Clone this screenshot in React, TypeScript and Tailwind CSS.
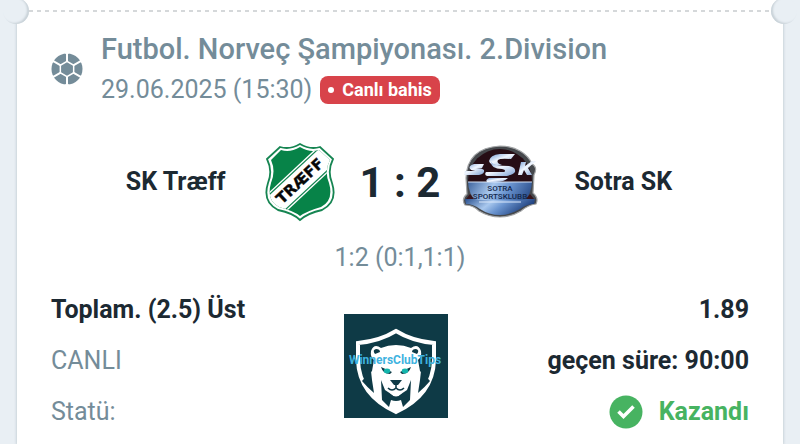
import type { ReactNode } from 'react'

function BallIcon() {
  return (
    <svg viewBox="0 0 32 32" className="size-8 shrink-0" aria-hidden="true">
      <circle cx="16" cy="16" r="15.5" fill="#748c99" />
      <path d="M16 0v32M1 7.300 31 24.700M1 24.700 31 7.300" stroke="#fff" strokeWidth="2" />
      <path d="m16 7.500 7.400 4.300v8.400L16 24.500l-7.400-4.300v-8.400z" fill="#fff" />
      <path d="m16 10 5.200 3v6L16 22l-5.200-3v-6z" fill="#748c99" stroke="#748c99" strokeWidth="1.4" strokeLinejoin="round" />
      <path
        d="m14 0 2 2.500L18 0ZM14 32l2-2.500 2 2.500ZM1 6l2.500 2.800L.5 10ZM31 6l-2.500 2.800 3 1.200ZM1 26l2.500-2.800-3-1.200ZM31 26l-2.500-2.800 3-1.200Z"
        fill="#fff"
      />
    </svg>
  )
}

function TraeffCrest() {
  return (
    <svg viewBox="0 0 76 84" className="h-[84px] w-[76px] shrink-0" role="img" aria-label="SK Træff">
      <defs>
        <clipPath id="traeff-shield">
          <path d="M38 7Q28 13 19 10L9 20Q14 31 9 43Q4 60 17 67Q32 71 38 76Q45 71 59 67Q72 60 67 43Q62 31 68 20L57 10Q48 13 38 7Z" />
        </clipPath>
      </defs>
      <path
        d="M38 4Q28 10 18 7L5 19Q11 31 6 43Q0 62 16 70Q31 73 38 80Q46 73 60 70Q76 62 70 43Q65 31 71 19L58 7Q48 10 38 4Z"
        fill="#fff"
        stroke="#168552"
        strokeWidth="1.8"
      />
      <g clipPath="url(#traeff-shield)">
        <path d="M0 0h76v84H0z" fill="#078348" />
        <g transform="rotate(-43 38 41)">
          <path d="M-12 28h100v26H-12z" fill="#fff" />
          <path d="M-12 30h100M-12 52h100" stroke="#168552" strokeWidth="1.2" />
          <text
            x="38"
            y="46"
            textAnchor="middle"
            fontSize="15"
            fontWeight="700"
            fill="#080808"
            stroke="#080808"
            strokeWidth=".4"
            className="font-['DejaVu_Sans',sans-serif]"
          >
            TRÆFF
          </text>
        </g>
      </g>
    </svg>
  )
}

function SotraCrest() {
  return (
    <svg viewBox="0 0 76 76" className="size-[76px] shrink-0" role="img" aria-label="Sotra SK">
      <defs>
        <linearGradient id="sotra-blue" x1="0" x2="1" y2=".3">
          <stop offset="0" stopColor="#284f8e" />
          <stop offset=".4" stopColor="#a9c8ee" />
          <stop offset=".6" stopColor="#6b95d0" />
          <stop offset="1" stopColor="#1c3d7b" />
        </linearGradient>
        <linearGradient id="sotra-silver" x1="0" x2="1" y1="0" y2="1">
          <stop offset="0" stopColor="#6f98d3" />
          <stop offset=".45" stopColor="#f2f7ff" />
          <stop offset="1" stopColor="#7b9fd2" />
        </linearGradient>
        <clipPath id="sotra-disc">
          <circle cx="38" cy="37" r="32" />
        </clipPath>
      </defs>
      <path
        d="M38 2C54 2 66 10 70 20Q76 23 72 31L71 49Q77 54 74 60Q66 61 59 67Q49 73 38 73Q27 73 17 67Q11 61 3 61Q-1 55 5 50L4 34Q5 4 38 2Z"
        fill="#45484c"
        stroke="#a3a5a7"
        strokeWidth="1.2"
      />
      <g clipPath="url(#sotra-disc)">
        <path d="M0 0h76v38H0z" fill="#260d15" />
        <path d="M0 38h76v38H0z" fill="url(#sotra-blue)" />
        <path d="M0 38h76" stroke="#d6e4f7" />
      </g>
      <path d="M3 55Q10 54 17 56H60Q67 54 73 55L72 60Q65 60 58 65Q48 71 38 71Q27 71 18 65Q11 60 4 60Z" fill="url(#sotra-blue)" />
      <path d="M4 55 8 50 12 55ZM64 55l4-5 4 5Z" fill="#38151c" />
      <path d="M17 58h42" stroke="#dce9fc" />
      <g fill="url(#sotra-silver)">
        <path d="M53 10H38Q28 11 27 17Q28 21 34 21H40Q34 19 36 16Q38 14 49 15Z" />
        <path d="M22 20H12Q6 22 8 25Q10 27 16 27H3L2 31H17Q23 30 22 26Q20 24 14 24H20Z" />
        <path d="M29 18Q32 22 47 22Q54 23 53 28Q50 32 41 32H25Q22 31 24 28H42Q45 26 40 25Q29 25 29 18Z" />
        <path d="M27 34H46Q42 38 34 38H25Q23 36 27 34Z" />
        <path d="M59 18H64L63 22 70 17H74L66 24 70 31H65L62 26 60 31H56Z" />
      </g>
      <g textAnchor="middle" fontSize="8" fontWeight="500" fill="#14284d" className="font-['Roboto',sans-serif]">
        <text x="38" y="47">SOTRA</text>
        <text x="38" y="55">SPORTSKLUBB</text>
      </g>
    </svg>
  )
}

function LionBadge() {
  return (
    <svg viewBox="0 0 104 104" className="size-[104px]" role="img" aria-label="WinnersClubTips">
      <path d="M0 0h104v104H0z" fill="#0e3a46" />
      <path
        d="M52 17Q68 27 90 29V46Q89 81 52 98Q15 81 14 46V29Q36 27 52 17Z"
        fill="#0e3a46"
        stroke="#fff"
        strokeWidth="4"
      />
      <path
        d="M37 34Q44 31 52 31Q60 31 67 34Q74 29 77 37Q78 43 74 46L76 57L85 67Q76 87 52 97Q28 87 19 67L28 57L30 46Q26 43 27 37Q30 29 37 34Z"
        fill="#fff"
      />
      <path d="M31 40Q28 36 32 35Q36 35 36 38ZM73 40q3-4-1-5q-4 0-4 3Z" fill="#0e3a46" />
      <path d="M18 67 27 57 28 66 30 79Q23 73 18 67ZM86 67 77 57 76 66 74 79Q81 73 86 67Z" fill="#0e3a46" />
      <path
        d="M37 66 41 76 47 80Q52 84 57 80L63 76 67 66 66 86 59 93 57 86Q52 88 47 86L45 93 38 86Z"
        fill="#0e3a46"
      />
      <path d="M46 66h12l-4 5h-4Z" fill="#0e3a46" />
      <path d="M52 70v4M52 74q-4 4-8 0M52 74q4 4 8 0" fill="none" stroke="#0e3a46" strokeWidth="1.6" />
      <path d="M46 79Q52 77 58 79Q52 86 46 79Z" fill="#fff" />
      <path d="M37 53 48 58 46 60Q39 60 37 53ZM67 53 56 58l2 2Q65 60 67 53Z" fill="#0e3a46" />
      <ellipse cx="43" cy="57" rx="3.2" ry="2.4" fill="#13b5ac" />
      <ellipse cx="61" cy="57" rx="3.2" ry="2.4" fill="#13b5ac" />
      <text
        x="51"
        y="50"
        textAnchor="middle"
        fontSize="12"
        fontWeight="700"
        fill="#3fb3df"
        className="font-['Roboto',sans-serif]"
      >
        WinnersClubTips
      </text>
    </svg>
  )
}

function CheckIcon() {
  return (
    <svg viewBox="0 0 34 34" className="size-[34px]" aria-hidden="true">
      <circle cx="17" cy="17" r="16.5" fill="#47b361" />
      <path d="m9.500 16.500 5 5 10-10" fill="none" stroke="#fff" strokeWidth="3.6" />
    </svg>
  )
}

function Row({ label, children }: { label: ReactNode; children: ReactNode }) {
  return (
    <div className="flex h-[51px] items-center justify-between">
      <dt>{label}</dt>
      <dd className="font-bold text-[#1c2932]">{children}</dd>
    </div>
  )
}

export default function App() {
  return (
    <div className="min-h-screen overflow-hidden bg-[#e9eff4] px-[17px] font-['Roboto',sans-serif] text-[25px] text-[#748c99]">
      <article className="relative min-h-screen bg-white pb-2 shadow-[0_0_3px_#b4bfc6]">
        <span className="absolute -top-0.5 -left-3.5 size-[26px] rounded-full bg-[#e9eff4] shadow-[inset_-2px_-1px_2px_#c9d2d8]" />
        <span className="absolute -top-0.5 -right-3.5 size-[26px] rounded-full bg-[#e9eff4] shadow-[inset_2px_-1px_2px_#c9d2d8]" />
        <div className="mx-3 h-3 bg-[repeating-linear-gradient(90deg,#d5d8da_0_4px,transparent_4px_8px)] bg-[length:100%_2px] bg-bottom bg-no-repeat" />

        <header className="flex items-center gap-[18px] px-[34px] pt-4">
          <BallIcon />
          <div>
            <h1 className="text-[29px] leading-[42px] font-medium">Futbol. Norveç Şampiyonası. 2.Division</h1>
            <div className="flex h-10 items-center gap-2">
              <time dateTime="2025-06-29T15:30">29.06.2025 (15:30)</time>
              <span className="flex h-7 items-center gap-2 rounded-lg bg-[#d8434a] px-2 text-lg font-bold text-white">
                <span className="size-1.5 rounded-full bg-white" />
                Canlı bahis
              </span>
            </div>
          </div>
        </header>

        <section className="grid grid-cols-[1fr_auto_1fr] items-center gap-[22px] pt-[30px] pb-5 font-bold text-[#1c2932]">
          <div className="flex items-center justify-end gap-9">
            <span>SK Træff</span>
            <TraeffCrest />
          </div>
          <p className="text-[42px]">1 : 2</p>
          <div className="flex items-center gap-9">
            <SotraCrest />
            <span>Sotra SK</span>
          </div>
        </section>
        <p className="text-center leading-7">1:2 (0:1,1:1)</p>

        <dl className="relative px-[34px] pt-3">
          <Row label={<span className="font-bold text-[#1c2932]">Toplam. (2.5) Üst</span>}>1.89</Row>
          <Row label="CANLI">geçen süre: 90:00</Row>
          <Row label="Statü:">
            <span className="flex items-center gap-4 text-[#47b361]">
              <CheckIcon />
              Kazandı
            </span>
          </Row>
          <div className="absolute inset-x-0 bottom-[19px] flex justify-center pr-2">
            <LionBadge />
          </div>
        </dl>
      </article>
    </div>
  )
}
